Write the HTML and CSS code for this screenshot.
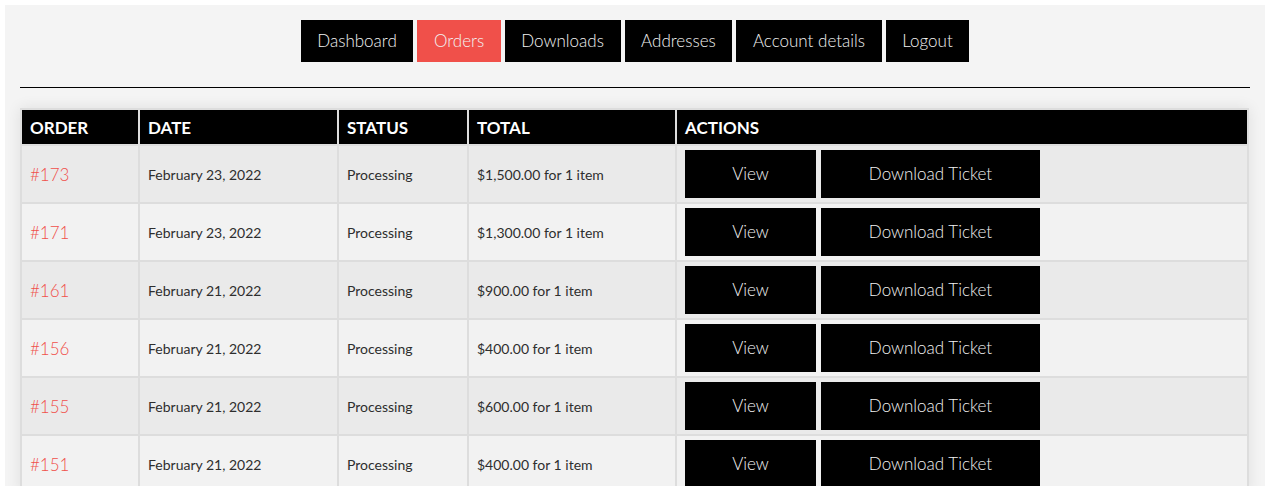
FILE: index.html
```html
<!DOCTYPE html>
<html lang="en">
<head>
<meta charset="utf-8">
<title>Orders</title>
<link rel="stylesheet" href="styles.css">
</head>
<body>
<div class="panel">
  <nav class="account-nav">
    <a class="nav-btn" href="#">Dashboard</a>
    <a class="nav-btn active" href="#">Orders</a>
    <a class="nav-btn" href="#">Downloads</a>
    <a class="nav-btn" href="#">Addresses</a>
    <a class="nav-btn" href="#">Account details</a>
    <a class="nav-btn" href="#">Logout</a>
  </nav>
  <hr class="divider">
  <table class="orders">
    <thead>
      <tr>
        <th class="c-order">Order</th>
        <th class="c-date">Date</th>
        <th class="c-status">Status</th>
        <th class="c-total">Total</th>
        <th class="c-actions">Actions</th>
      </tr>
    </thead>
    <tbody>
      <tr>
        <td><a class="order-link" href="#">#173</a></td>
        <td>February 23, 2022</td>
        <td>Processing</td>
        <td>$1,500.00 for 1 item</td>
        <td class="actions"><a class="btn btn-view" href="#">View</a><a class="btn btn-ticket" href="#">Download Ticket</a></td>
      </tr>
      <tr>
        <td><a class="order-link" href="#">#171</a></td>
        <td>February 23, 2022</td>
        <td>Processing</td>
        <td>$1,300.00 for 1 item</td>
        <td class="actions"><a class="btn btn-view" href="#">View</a><a class="btn btn-ticket" href="#">Download Ticket</a></td>
      </tr>
      <tr>
        <td><a class="order-link" href="#">#161</a></td>
        <td>February 21, 2022</td>
        <td>Processing</td>
        <td>$900.00 for 1 item</td>
        <td class="actions"><a class="btn btn-view" href="#">View</a><a class="btn btn-ticket" href="#">Download Ticket</a></td>
      </tr>
      <tr>
        <td><a class="order-link" href="#">#156</a></td>
        <td>February 21, 2022</td>
        <td>Processing</td>
        <td>$400.00 for 1 item</td>
        <td class="actions"><a class="btn btn-view" href="#">View</a><a class="btn btn-ticket" href="#">Download Ticket</a></td>
      </tr>
      <tr>
        <td><a class="order-link" href="#">#155</a></td>
        <td>February 21, 2022</td>
        <td>Processing</td>
        <td>$600.00 for 1 item</td>
        <td class="actions"><a class="btn btn-view" href="#">View</a><a class="btn btn-ticket" href="#">Download Ticket</a></td>
      </tr>
      <tr>
        <td><a class="order-link" href="#">#151</a></td>
        <td>February 21, 2022</td>
        <td>Processing</td>
        <td>$400.00 for 1 item</td>
        <td class="actions"><a class="btn btn-view" href="#">View</a><a class="btn btn-ticket" href="#">Download Ticket</a></td>
      </tr>
    </tbody>
  </table>
</div>
</body>
</html>
```

FILE: styles.css
```css
html, body {
  margin: 0;
  background: #ffffff;
}
body {
  padding: 5px 13px 0 5px;
  font-family: "Lato", "Open Sans", sans-serif;
  color: #2e2e2e;
}
.panel {
  background: #f4f4f4;
  padding: 15px 15px 20px 15px;
  min-height: 600px;
}
.account-nav {
  display: flex;
  justify-content: center;
  gap: 4px;
}
.nav-btn {
  display: block;
  height: 42px;
  line-height: 42px;
  padding: 0 16.6px;
  background: #000;
  color: #f2f2f2;
  text-decoration: none;
  font-size: 17px;
  font-weight: 300;
}
.nav-btn.active {
  background: #f0504a;
}
.divider {
  border: 0;
  border-top: 1px solid #000;
  margin: 25px 0 20px 0;
  height: 0;
}
.orders {
  width: 1229px;
  table-layout: fixed;
  border-collapse: separate;
  border-spacing: 0;
  border-top: 2px solid #dddddd;
  border-left: 2px solid #dddddd;
  box-shadow: 0 0 14px rgba(0, 0, 0, 0.09);
}
.orders th,
.orders td {
  box-sizing: border-box;
  border-right: 2px solid #dddddd;
  border-bottom: 2px solid #dddddd;
  text-align: left;
  padding: 0 8px;
}
.orders th {
  background: #000;
  color: #fff;
  text-transform: uppercase;
  font-weight: 700;
  font-size: 17px;
  height: 36px;
  padding-top: 1px;
}
.c-order { width: 118px; }
.c-date { width: 199px; }
.c-status { width: 130px; }
.c-total { width: 208px; }
.c-actions { width: 572px; }
.orders td {
  height: 58px;
  font-size: 14px;
  color: #2e2e2e;
}
.orders tbody tr:nth-child(odd) td { background: #eaeaea; }
.orders tbody tr:nth-child(even) td { background: #f2f2f2; }
.order-link {
  color: #f0504a;
  text-decoration: none;
  font-size: 17px;
  font-weight: 300;
}
.orders td.actions {
  padding: 4px 8px;
}
.actions {
  white-space: nowrap;
}
.btn {
  display: inline-block;
  vertical-align: top;
  height: 48px;
  line-height: 48px;
  background: #000;
  color: #f2f2f2;
  text-decoration: none;
  text-align: center;
  font-size: 17px;
  font-weight: 300;
}
.btn-view { width: 131px; margin-right: 5px; }
.btn-ticket { width: 219px; }
```
